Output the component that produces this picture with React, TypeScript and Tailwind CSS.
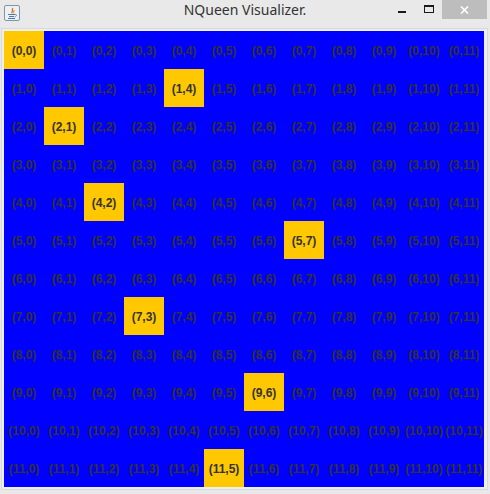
const SIZE = 12;
// row -> queen column, rows without an entry are empty
const queenAt: Record<number, number> = { 0: 0, 1: 4, 2: 1, 4: 2, 5: 7, 7: 3, 9: 6, 11: 5 };

function JavaIcon() {
  return (
    <span className="flex h-[16px] w-[16px] items-center justify-center rounded-[2px] border border-[#7f95a8] bg-[#eef1f4]">
      <svg width="12" height="13" viewBox="0 0 12 13" fill="none">
        <path d="M7 1C5 3 8 3.500 5.500 6" stroke="#e8711c" strokeWidth="1.300" />
        <path d="M8.500 3C7 4 8.500 5 7 6.500" stroke="#e8711c" strokeWidth="1" />
        <path d="M2 7.500H9M3 9.500H8M2 11.500H9" stroke="#4a7ba7" strokeWidth="1" />
        <path d="M9 7.500C11 7 11 9.500 8.500 10" stroke="#4a7ba7" strokeWidth="0.800" />
      </svg>
    </span>
  );
}

function TitleBar() {
  return (
    <div className="relative flex h-[28px] items-start bg-[#e9e9e9]">
      <div className="ml-[4px] mt-[5px]">
        <JavaIcon />
      </div>
      <div className="absolute left-0 right-0 top-[1px] text-center font-['Noto_Sans',sans-serif] text-[14px] leading-[18px] text-[#333333]">
        NQueen Visualizer.
      </div>
      <div className="ml-auto flex items-start">
        <div className="mr-[18px] mt-[11px] h-[2px] w-[8px] bg-[#1a1a1a]" />
        <div className="mr-[8px] mt-[5px] h-[8px] w-[10px] border border-t-2 border-[#1a1a1a]" />
        <div className="mr-[3px] flex h-[19px] w-[45px] items-center justify-center bg-[#bdbdbd]">
          <svg width="9" height="8" viewBox="0 0 9 8">
            <path d="M1 0.500L8 7.500M8 0.500L1 7.500" stroke="#ffffff" strokeWidth="1.600" />
          </svg>
        </div>
      </div>
    </div>
  );
}

function Cell({ row, col }: { row: number; col: number }) {
  const isQueen = queenAt[row] === col;
  return (
    <div
      className={
        isQueen
          ? "flex items-center justify-center whitespace-nowrap bg-[#ffc800] pt-[1px]"
          : "flex items-center justify-center whitespace-nowrap pt-[1px]"
      }
    >
      ({row},{col})
    </div>
  );
}

export default function App() {
  const rows = Array.from({ length: SIZE }, (_, i) => i);
  return (
    <div className="h-[494px] w-[490px] overflow-hidden bg-[#e9e9e9]">
      <TitleBar />
      <div className="mx-[1px] h-[462px] w-[487px] border border-[#d9d9d9] bg-[#eeeeee] pl-[2px] pr-[2px] pt-[2px]">
        <div className="grid h-[456px] w-[480px] grid-cols-12 grid-rows-12 bg-[#0000ff] font-['Liberation_Sans',sans-serif] text-[12px] font-bold text-[#333333]">
          {rows.map((r) => rows.map((c) => <Cell key={`${r}-${c}`} row={r} col={c} />))}
        </div>
      </div>
    </div>
  );
}
